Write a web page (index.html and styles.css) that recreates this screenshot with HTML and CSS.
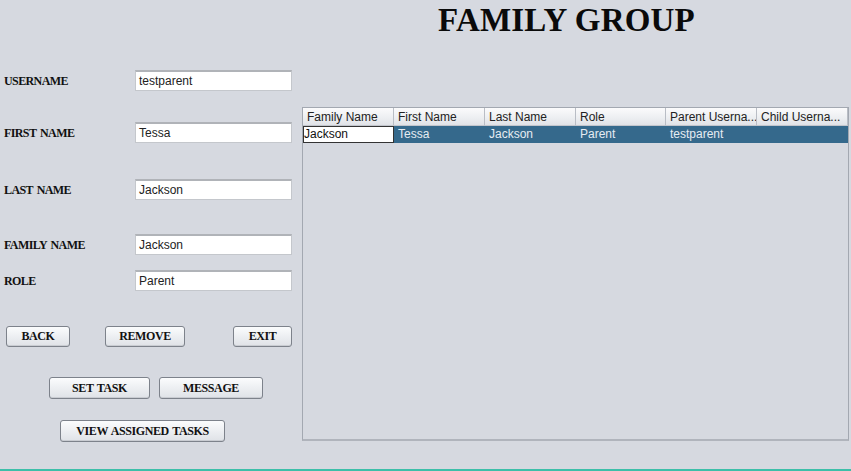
FILE: index.html
```html
<!DOCTYPE html>
<html>
<head>
<meta charset="utf-8">
<link rel="stylesheet" href="styles.css">
</head>
<body>
<div class="app">
  <div class="left">
    <div class="field f1"><span class="lbl">USERNAME</span><span class="inp">testparent</span></div>
    <div class="field f2"><span class="lbl">FIRST NAME</span><span class="inp">Tessa</span></div>
    <div class="field f3"><span class="lbl">LAST NAME</span><span class="inp">Jackson</span></div>
    <div class="field f4"><span class="lbl">FAMILY NAME</span><span class="inp">Jackson</span></div>
    <div class="field f5"><span class="lbl">ROLE</span><span class="inp">Parent</span></div>
    <div class="btnrow r1">
      <button class="btn b-back">BACK</button>
      <button class="btn b-remove">REMOVE</button>
      <button class="btn b-exit">EXIT</button>
    </div>
    <div class="btnrow r2">
      <button class="btn b-set">SET TASK</button>
      <button class="btn b-msg">MESSAGE</button>
    </div>
    <div class="btnrow r3">
      <button class="btn b-view">VIEW ASSIGNED TASKS</button>
    </div>
  </div>
  <div class="right">
    <h1 class="title">FAMILY GROUP</h1>
    <div class="scroll">
      <div class="thead">
        <div class="th">Family Name</div>
        <div class="th">First Name</div>
        <div class="th">Last Name</div>
        <div class="th">Role</div>
        <div class="th">Parent Userna...</div>
        <div class="th">Child Userna...</div>
      </div>
      <div class="tr sel">
        <div class="td focus">Jackson</div>
        <div class="td">Tessa</div>
        <div class="td">Jackson</div>
        <div class="td">Parent</div>
        <div class="td">testparent</div>
        <div class="td"></div>
      </div>
    </div>
  </div>
</div>
<div class="statusline"></div>
</body>
</html>
```

FILE: styles.css
```css
html, body {
  margin: 0;
  padding: 0;
}
body {
  background: #d6d9e0;
  width: 851px;
  height: 471px;
  overflow: hidden;
  font-family: "Liberation Sans", Arial, sans-serif;
}
.app {
  height: 469px;
  display: grid;
  grid-template-columns: 302px 547px;
}
.left {
  display: flex;
  flex-direction: column;
  padding-left: 4px;
}
.field {
  display: flex;
  align-items: center;
  height: 21px;
}
.f1 { margin-top: 70px; }
.f2 { margin-top: 31px; }
.f3 { margin-top: 36px; }
.f4 { margin-top: 34px; }
.f5 { margin-top: 15px; }
.lbl {
  width: 131px;
  font-family: "Liberation Serif", "Times New Roman", serif;
  font-weight: bold;
  font-size: 12px;
  color: #111;
  letter-spacing: -0.6px;
  word-spacing: 1.5px;
  padding-top: 1px;
}
.inp {
  box-sizing: border-box;
  width: 157px;
  height: 21px;
  background: #fff;
  border: 1px solid #c4c7cc;
  border-top: 2px solid #b0b3b8;
  padding: 0 0 0 3px;
  font-size: 12px;
  color: #222;
  line-height: 18px;
}
.btnrow {
  display: flex;
}
.r1 { margin-top: 35px; padding-left: 2px; }
.r2 { margin-top: 30px; padding-left: 45px; }
.r3 { margin-top: 21px; padding-left: 56px; }
.btn {
  box-sizing: border-box;
  height: 21px;
  padding: 0;
  border: 1px solid #7d828b;
  border-radius: 3px;
  background: linear-gradient(#fbfcfd, #eef0f3 45%, #dfe2e7);
  box-shadow: inset 0 -1px 0 #c9ccd2;
  font-family: "Liberation Serif", "Times New Roman", serif;
  font-weight: bold;
  font-size: 12px;
  color: #111;
  letter-spacing: -0.4px;
  word-spacing: 1px;
}
.b-back { width: 64px; }
.b-remove { width: 80px; margin-left: 35px; }
.b-exit { width: 59px; margin-left: 48px; }
.b-set { width: 101px; }
.b-msg { width: 104px; margin-left: 9px; }
.b-view { width: 165px; height: 22px; }
.b-set, .b-msg { height: 22px; }
.right {
  display: flex;
  flex-direction: column;
}
.title {
  margin: 4px 0 0 136px;
  font-family: "Liberation Serif", "Times New Roman", serif;
  font-weight: bold;
  font-size: 33px;
  line-height: 32px;
  color: #0a0a0a;
  letter-spacing: 0.2px;
}
.scroll {
  box-sizing: border-box;
  margin-top: 71px;
  width: 547px;
  height: 334px;
  border: 1px solid #a3a8b1;
  border-bottom: 2px solid #b0b4bc;
}
.thead, .tr {
  display: grid;
  grid-template-columns: 91px 91px 91px 90px 91px 91px;
}
.thead {
  height: 18px;
}
.th {
  box-sizing: border-box;
  background: linear-gradient(#fbfbfc, #eceef1 60%, #e0e2e7);
  border-right: 1px solid #b9bdc5;
  border-bottom: 1px solid #c2c5cc;
  padding-left: 4px;
  font-size: 12px;
  line-height: 18px;
  color: #222;
  white-space: nowrap;
  overflow: hidden;
}
.tr {
  height: 16px;
}
.sel .td {
  background: #35698c;
  color: #e6ecf2;
  font-size: 12px;
  line-height: 17px;
  padding-left: 4px;
  white-space: nowrap;
}
.sel .td.focus {
  box-sizing: border-box;
  background: #fff;
  color: #111;
  border: 1px solid #333;
  padding-left: 0;
  line-height: 15px;
}
.statusline {
  height: 2px;
  background: #3dbfa9;
}
```
